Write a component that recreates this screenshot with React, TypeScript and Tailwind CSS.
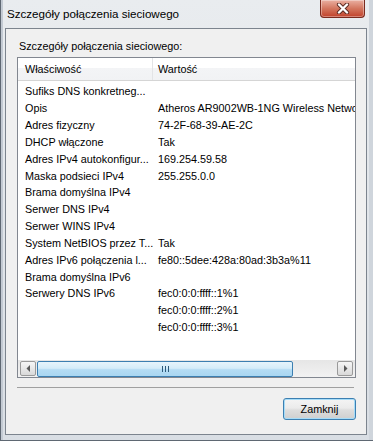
import React from "react";

const rows: [string, string][] = [
  ["Sufiks DNS konkretneg...", ""],
  ["Opis", "Atheros AR9002WB-1NG Wireless Network Adapter"],
  ["Adres fizyczny", "74-2F-68-39-AE-2C"],
  ["DHCP włączone", "Tak"],
  ["Adres IPv4 autokonfigur...", "169.254.59.58"],
  ["Maska podsieci IPv4", "255.255.0.0"],
  ["Brama domyślna IPv4", ""],
  ["Serwer DNS IPv4", ""],
  ["Serwer WINS IPv4", ""],
  ["System NetBIOS przez T...", "Tak"],
  ["Adres IPv6 połączenia l...", "fe80::5dee:428a:80ad:3b3a%11"],
  ["Brama domyślna IPv6", ""],
  ["Serwery DNS IPv6", "fec0:0:0:ffff::1%1"],
  ["", "fec0:0:0:ffff::2%1"],
  ["", "fec0:0:0:ffff::3%1"],
];

const CloseButton = () => (
  <div className="absolute right-[8px] top-0 h-[18px] w-[45px] rounded-b-[4px] border border-t-0 border-[#7a2a1e] bg-gradient-to-b from-[#eab0a2] via-[#d3765f] to-[#c0402a] shadow-[inset_0_0_0_1px_rgba(255,255,255,0.35)] flex items-center justify-center">
    <svg width="14" height="11" viewBox="0 0 14 11">
      <path d="M3 1.5 L11 9.5 M11 1.5 L3 9.5" stroke="#5a2a22" strokeWidth="4.2" strokeLinecap="round" />
      <path d="M3 1.5 L11 9.5 M11 1.5 L3 9.5" stroke="#ffffff" strokeWidth="2.4" strokeLinecap="round" />
    </svg>
  </div>
);

const ArrowButton = ({ dir }: { dir: "left" | "right" }) => (
  <div className="h-[15px] w-[16px] rounded-[2px] border border-[#9a9a9a] bg-gradient-to-b from-[#f6f6f6] to-[#d9d9d9] flex items-center justify-center">
    <svg width="5" height="7" viewBox="0 0 5 7">
      {dir === "left" ? <path d="M4 0 L0.5 3.5 L4 7 Z" fill="#5a5a5a" /> : <path d="M1 0 L4.5 3.5 L1 7 Z" fill="#5a5a5a" />}
    </svg>
  </div>
);

export default function App() {
  return (
    <div
      className="relative h-[443px] w-[373px] overflow-hidden bg-white text-black"
      style={{ fontFamily: '"Liberation Sans", Arial, sans-serif' }}
    >
      {/* window frame */}
      <div className="relative h-[441px] w-[373px] border-b border-l border-[#5f6873] bg-gradient-to-b from-[#e9ecef] to-[#d9dee4] shadow-[inset_2px_0_0_#c3cad3,inset_-4px_0_0_#cfd5dc]">
        {/* title bar */}
        <div className="flex h-[28px] items-center pl-[6px] text-[11.6px] text-black">
          Szczegóły połączenia sieciowego
        </div>
        <CloseButton />

        {/* client area */}
        <div className="ml-[4px] flex h-[407px] w-[362px] flex-col border border-[#7c848e] bg-[#f0f0f0] text-[10.8px]">
          <div className="pl-[13px] pt-[10px] leading-[14px]">Szczegóły połączenia sieciowego:</div>

          <div className="ml-[11px] mt-[4px] flex h-[321px] w-[339px] flex-col overflow-hidden border border-[#828790] bg-white">
            {/* header */}
            <div className="flex h-[23px] shrink-0 border-b border-[#d5d5d5] bg-[linear-gradient(to_bottom,#ffffff_0%,#ffffff_45%,#f3f4f6_46%,#f1f2f4_100%)]">
              <div className="flex w-[135px] items-center border-r border-[#e3e4e6] pl-[7px]">Właściwość</div>
              <div className="flex items-center pl-[5px]">Wartość</div>
            </div>

            {/* rows */}
            <div className="flex-1 pt-[2px]">
              {rows.map(([k, v], i) => (
                <div key={i} className="flex h-[16.85px] items-center whitespace-nowrap">
                  <div className="w-[135px] shrink-0 pl-[7px]">{k}</div>
                  <div className="pl-[5px]">{v}</div>
                </div>
              ))}
            </div>

            {/* horizontal scrollbar */}
            <div className="flex h-[17px] shrink-0 items-center gap-[1px] bg-gradient-to-b from-[#e6e6e6] to-[#f2f2f2] px-[2px]">
              <ArrowButton dir="left" />
              <div className="flex h-[16px] w-[256px] items-center justify-center rounded-[2px] border border-[#3c7fb1] bg-[linear-gradient(to_bottom,#e6f4fc_0%,#d4ecf9_45%,#b4dcf4_55%,#a9d6f1_100%)]">
                <svg width="7" height="6" viewBox="0 0 7 6">
                  <path d="M0.5 0 V6 M3.5 0 V6 M6.5 0 V6" stroke="#2c5a7a" strokeWidth="1" />
                </svg>
              </div>
              <div className="flex-1" />
              <ArrowButton dir="right" />
            </div>
          </div>

          {/* separator */}
          <div className="ml-[11px] mt-[9px] h-[2px] w-[337px] border-t border-[#a0a0a0] border-b-white" />

          <div className="flex justify-end pr-[10px] pt-[9px]">
            <button className="h-[22px] w-[73px] rounded-[3px] border border-[#3c7fb1] bg-[linear-gradient(to_bottom,#f4f4f4_0%,#ebebeb_45%,#dddddd_55%,#cfcfcf_100%)] text-[10.8px] shadow-[inset_0_0_0_1px_#a6dcf8]">
              Zamknij
            </button>
          </div>
        </div>
      </div>
    </div>
  );
}
